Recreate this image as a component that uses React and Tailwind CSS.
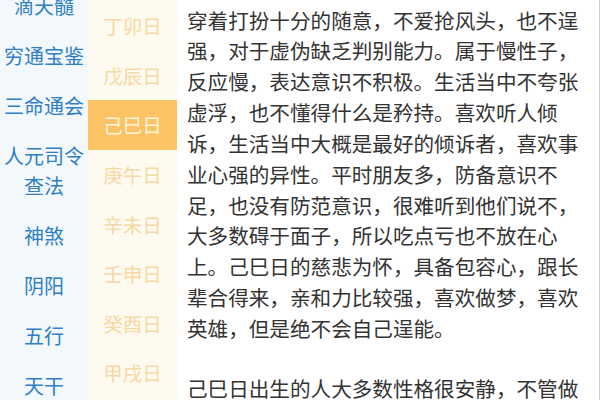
const categories = [
  { lines: ['滴天髓'] },
  { lines: ['穷通宝鉴'] },
  { lines: ['三命通会'] },
  { lines: ['人元司令', '查法'] },
  { lines: ['神煞'] },
  { lines: ['阴阳'] },
  { lines: ['五行'] },
  { lines: ['天干'] },
];

const days = ['丁卯日', '戊辰日', '己巳日', '庚午日', '辛未日', '壬申日', '癸酉日', '甲戌日'];

const paragraphs = [
  '穿着打扮十分的随意，不爱抢风头，也不逞强，对于虚伪缺乏判别能力。属于慢性子，反应慢，表达意识不积极。生活当中不夸张虚浮，也不懂得什么是矜持。喜欢听人倾诉，生活当中大概是最好的倾诉者，喜欢事业心强的异性。平时朋友多，防备意识不足，也没有防范意识，很难听到他们说不，大多数碍于面子，所以吃点亏也不放在心上。己巳日的慈悲为怀，具备包容心，跟长辈合得来，亲和力比较强，喜欢做梦，喜欢英雄，但是绝不会自己逞能。',
  '己巳日出生的人大多数性格很安静，不管做什么事情都比较沉稳，不急不躁。',
];

export default function App() {
  return (
    <div
      className="flex h-[400px] w-[600px] overflow-hidden bg-white"
      style={{ fontFamily: '"Noto Sans CJK SC", "Noto Sans", sans-serif' }}
    >
      {/* 分类 */}
      <div className="w-[88px] shrink-0 bg-[#f3f8fd]">
        <div className="-mt-[19px]">
          {categories.map((c) => (
            <div key={c.lines[0]} className="flex flex-col items-center py-[10px] text-[20px] leading-[30px] text-[#2f7fc6]">
              {c.lines.map((l) => (
                <span key={l}>{l}</span>
              ))}
            </div>
          ))}
        </div>
      </div>

      {/* 日柱 */}
      <div className="w-[89px] shrink-0 bg-[#fffaf0] pt-px">
        {days.map((d) => (
          <div
            key={d}
            className={
              d === '己巳日'
                ? 'flex h-[49.6px] items-center justify-center bg-[#fcc264] text-[19.5px] text-[#fff4df]'
                : 'flex h-[49.6px] items-center justify-center text-[19.5px] text-[#f6d9a2]'
            }
          >
            {d}
          </div>
        ))}
      </div>

      {/* 正文 */}
      <div className="flex-1 border-r border-[#cfcfcf] pl-[10px] pt-[4.5px]">
        <div className="w-[405px] text-[20.6px] leading-[30.85px] text-[#333333]">
          {paragraphs.map((p, i) => (
            <p key={i} className={i > 0 ? 'mt-[29px]' : ''}>
              {p}
            </p>
          ))}
        </div>
      </div>
    </div>
  );
}
